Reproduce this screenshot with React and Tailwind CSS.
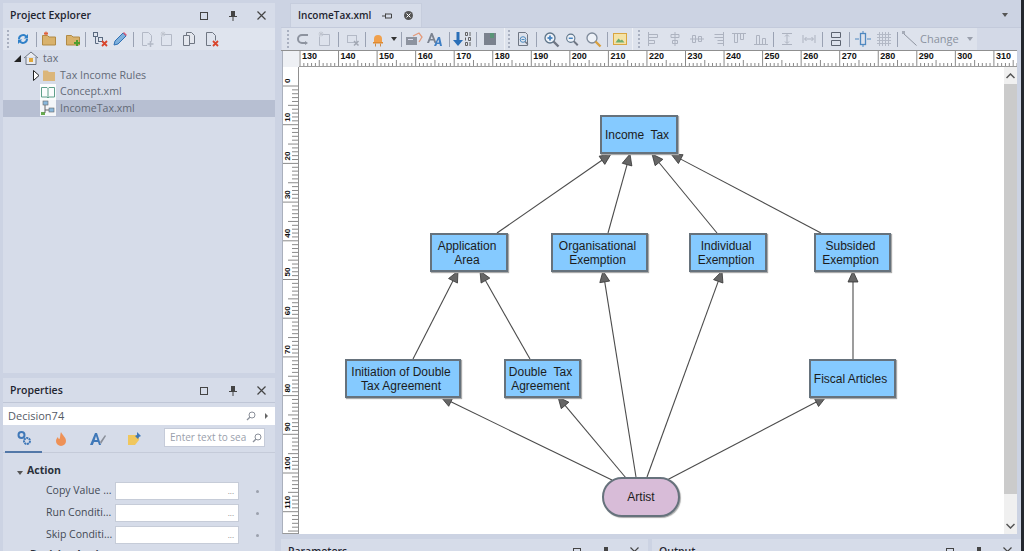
import React from "react";

const Svg = ({ children, w = 16, h = 16, vb }) => (
  <svg width={w} height={h} viewBox={vb || `0 0 ${w} ${h}`} fill="none" className="block shrink-0">{children}</svg>
);

const Grip = () => (
  <div className="flex flex-col gap-[2px] w-[2px] shrink-0">
    {[0, 1, 2, 3, 4].map((i) => <div key={i} className="w-[2px] h-[2px] bg-[#a9b0c0]" />)}
  </div>
);
const Sep = () => <div className="w-px h-[15px] bg-[#9aa2b3] shrink-0" />;
const Slot = ({ w = 21, children }) => <div className="flex items-center justify-center shrink-0 h-full" style={{ width: w }}>{children}</div>;

const Refresh = () => (
  <Svg><path d="M3 8a5 5 0 0 1 8.500-3.500L13 3v4.500H8.800l1.500-1.600A3.200 3.200 0 0 0 5 8z" fill="#2f80c8" /><path d="M13 8a5 5 0 0 1-8.500 3.500L3 13V8.500h4.200l-1.500 1.600A3.200 3.200 0 0 0 11 8z" fill="#2f80c8" /></Svg>
);
const Folder = ({ plus, star }) => (
  <Svg>
    <path d="M1.500 4.500h5l1.500 1.500h6.500v8h-13z" fill="#d9b26c" stroke="#b18a45" />
    {star && <path d="M5 0.500v4M3 2.500h4M3.500 1l3 3M6.500 1l-3 3" stroke="#e0603a" strokeWidth="1" />}
    {plus && <path d="M12 9v6M9 12h6" stroke="#4f9e2f" strokeWidth="2" />}
  </Svg>
);
const TreeX = ({ c = "#5a6a80", x = "#d9452c" }) => (
  <Svg>
    <rect x="1.500" y="1.500" width="4" height="4" stroke={c} />
    <rect x="6.500" y="6.500" width="4" height="4" stroke={c} />
    <path d="M3.500 5.500v7h3" stroke={c} />
    <path d="M10 10l5 5M15 10l-5 5" stroke={x} strokeWidth="1.800" />
  </Svg>
);
const Pencil = () => (
  <Svg><path d="M2 14l1-4 8-8 3 3-8 8z" fill="#7fb0dc" stroke="#2f70b4" /><path d="M11.500 1.500l3 3" stroke="#d9607a" strokeWidth="1.500" /></Svg>
);
const FilePlus = () => (
  <Svg><path d="M3.500 1.500h6l3 3v6M8 14.500H3.500v-13" stroke="#b3b9c6" /><path d="M11.500 10v6M8.500 13h6" stroke="#b3b9c6" strokeWidth="1.500" /></Svg>
);
const FileStar = () => (
  <Svg><path d="M4.500 3.500h8v11h-10v-9" stroke="#b3b9c6" /><path d="M4 0.500v5M1.500 3h5M2.200 1.200l3.600 3.600M5.800 1.200l-3.600 3.600" stroke="#c0c5cf" /></Svg>
);
const Copy = () => (
  <Svg><path d="M5.500 1.500h5l3 3v8h-8z" stroke="#6f7683" fill="#e4e7ee" /><path d="M2.500 4.500h6v10h-6z" stroke="#6f7683" fill="#e4e7ee" /></Svg>
);
const FileX = () => (
  <Svg><path d="M3.500 1.500h6l3 3v5M8 14.500H3.500v-13" stroke="#6f7683" /><path d="M10 10l5 5M15 10l-5 5" stroke="#d9452c" strokeWidth="1.800" /></Svg>
);
const Undo = () => (
  <Svg><path d="M12 4H6a4 4 0 0 0 0 8h4" stroke="#8d939f" strokeWidth="2" /><path d="M9 10l3 2-3 2z" fill="#8d939f" /></Svg>
);
const BoxX = () => (
  <Svg><rect x="3.500" y="4.500" width="9" height="7" stroke="#b3b9c6" /><path d="M10 10l4.500 4.500M14.500 10L10 14.500" stroke="#a0a6b2" strokeWidth="1.500" /></Svg>
);
const Bulb = () => (
  <Svg><path d="M4 8a4 4 0 0 1 8 0v3H4z" fill="#f0a04c" /><rect x="3" y="11" width="10" height="1.500" fill="#e08a30" /><path d="M5.500 12.500v3M10.500 12.500v3" stroke="#c98a4a" /></Svg>
);
const Caret = () => <div className="w-0 h-0 border-l-[3.500px] border-r-[3.500px] border-t-[4px] border-l-transparent border-r-transparent border-t-[#333]" />;
const BoxArrow = () => (
  <Svg w={18} h={16}><rect x="1" y="6" width="11" height="8" fill="#8d939f" /><rect x="3" y="8" width="5" height="1" fill="#dde" /><path d="M8 5l6-3 3 4-3 5" stroke="#e49a7a" strokeWidth="1.300" /></Svg>
);
const FontA = () => (
  <svg width="20" height="16" viewBox="0 0 20 16" className="block"><path d="M1 12L5 2h1.500l4 10h-2l-1-2.600H4L3 12zM4.600 8h2.300L5.800 5z" fill="#7b8390" /><path d="M8 15l4-9h2l2 9h-2l-.4-2h-2.500l-1 2zM11 11.500h2l-.5-3z" fill="#3f7fc4" /></svg>
);
const SortDown = () => (
  <svg width="20" height="16" viewBox="0 0 20 16" fill="none" className="block"><path d="M5 1v10" stroke="#2a6fb8" strokeWidth="3" /><path d="M0 9h10l-5 6z" fill="#2a6fb8" /><path d="M12.500 1.500h2v3h-2zM17 1v4M12.500 6.500v3M15.500 6.500h2v3h-2zM12.500 11.500h2v3h-2zM17 11v4" stroke="#555" strokeWidth=".9" /></svg>
);
const Book = () => (
  <Svg><rect x="2" y="2" width="12" height="12" fill="#7b828e" /><rect x="8" y="2" width="4" height="5" fill="#5a9578" /></Svg>
);
const DocZoom = () => (
  <Svg><path d="M3.500 1.500h7l2 2v11h-9z" stroke="#6f7683" /><circle cx="8" cy="8.500" r="2.800" stroke="#4f8cc0" /><path d="M10 10.500l3 3" stroke="#6f7683" strokeWidth="1.500" /><path d="M6.500 8.500h3" stroke="#4f8cc0" /></Svg>
);
const Lens = ({ sign, fill = "#4684c0" }) => (
  <svg width="17" height="17" viewBox="0 0 17 17" className="block">
    <circle cx="7" cy="7" r="5" stroke={sign === "none" ? "#7e8a9a" : "#5e7488"} strokeWidth="1.300" fill="#eef2f8" />
    <path d="M10.500 10.500l5 5" stroke={sign === "none" ? "#d8a040" : "#6f7683"} strokeWidth="2.400" />
    {sign !== "none" && <path d="M4.500 7h5" stroke={fill} strokeWidth="1.800" />}
    {sign === "plus" && <path d="M7 4.500v5" stroke={fill} strokeWidth="1.800" />}
  </svg>
);
const Picture = () => (
  <Svg><rect x="1.500" y="2.500" width="13" height="11" fill="#f4e2a6" stroke="#d9a540" /><path d="M3.500 11.500l3-4 2 2 1.500-1 2.500 3z" fill="#6fae6f" /></Svg>
);
const AlignA = ({ d }) => (
  <Svg><path d={d} stroke="#adb3c0" /></Svg>
);
const SmallLens = () => (
  <svg width="10" height="10" viewBox="0 0 10 10" fill="none" className="block shrink-0"><circle cx="6" cy="4" r="3" stroke="#8a8f99" /><path d="M3.800 6.200L1 9" stroke="#8a8f99" strokeWidth="1.300" /></svg>
);

const Node = ({ x, y, w, h = 39, children, cls = "" }) => (
  <div
    className={`absolute flex items-center justify-center text-center pr-[4px] bg-[#85caff] border-2 border-[#66727c] text-[12px] leading-[14px] text-[#1c1c1c] shadow-[1px_1px_1px_#aaa] ${cls}`}
    style={{ left: x - 299, top: y - 67, width: w, height: h, fontFamily: '"Liberation Sans", sans-serif' }}
  >
    <span>{children}</span>
  </div>
);

const edges = [
  [497, 233, 611, 154], [608, 233, 630, 154], [717, 233, 652, 154], [821, 233, 671, 154],
  [413, 359, 458, 271], [530, 359, 480, 271], [612, 480, 441, 397], [626, 478, 558, 397],
  [636, 477, 603, 271], [647, 477, 722, 271], [667, 480, 826, 397], [853, 359, 853, 271],
];

const Arrow = ({ e }) => {
  const [x1, y1, x2, y2] = e;
  const a = Math.atan2(y2 - y1, x2 - x1);
  const L = 11, W = 5;
  const bx = x2 - L * Math.cos(a), by = y2 - L * Math.sin(a);
  const nx = -Math.sin(a) * W, ny = Math.cos(a) * W;
  return (
    <g transform="translate(-299 -67)">
      <line x1={x1} y1={y1} x2={bx} y2={by} stroke="#4b4b4b" strokeWidth="1.100" />
      <polygon points={`${x2},${y2} ${bx + nx},${by + ny} ${bx - nx},${by - ny}`} fill="#666" stroke="#333" strokeWidth=".8" />
    </g>
  );
};

const HRuler = () => {
  const step = 38.55, tick = [];
  for (let i = 0; i < 190; i++) {
    const x = 1 + (i * step) / 10;
    const m = i % 10 === 0, f = i % 5 === 0;
    tick.push(<line key={i} x1={x} x2={x} y1={m ? 0 : 16} y2={m ? 16 : f ? 9 : 12} stroke="#8a8a8a" strokeWidth="1" />);
  }
  return (
    <svg width="718" height="16" className="block">
      {tick}
      <line x1="0" x2="718" y1="15.500" y2="15.500" stroke="#9a9a9a" />
      {Array.from({ length: 19 }).map((_, i) => (
        <text key={i} x={3 + i * step} y="8" fontSize="9" fontWeight="700" fill="#111" fontFamily="Liberation Sans, sans-serif">{130 + i * 10}</text>
      ))}
    </svg>
  );
};

const VRuler = () => {
  const step = 38.7, tick = [];
  for (let i = 0; i < 125; i++) {
    const y = 19 + (i * step) / 10;
    const m = i % 10 === 0, f = i % 5 === 0;
    tick.push(<line key={i} x1={m ? 0 : f ? 5 : 9} x2="16" y1={y} y2={y} stroke="#8a8a8a" strokeWidth="1" />);
  }
  return (
    <svg width="16" height="467" className="block">
      {tick}
      {Array.from({ length: 12 }).map((_, i) => (
        <text key={i} transform={`translate(7 ${16 + i * step}) rotate(-90)`} fontSize="8" fontWeight="700" fill="#111" fontFamily="Liberation Sans, sans-serif">{i * 10}</text>
      ))}
    </svg>
  );
};

const PanelHead = ({ title }) => (
  <div className="h-[24px] flex items-center shrink-0 pl-[7px] pt-[1px] text-[10.500px] font-semibold text-[#1f2530]">
    <span className="flex-1">{title}</span>
    <div className="w-[8px] h-[8px] border border-[#444] mr-[21px]" />
    <svg width="8" height="10" viewBox="0 0 8 10" className="block mr-[20px]"><path d="M2 0h4v5h2v1H4.500v4h-1V6H0V5h2z" fill="#444" /></svg>
    <svg width="9" height="9" viewBox="0 0 9 9" className="block mr-[9px]"><path d="M.5.500l8 8M8.500.500l-8 8" stroke="#444" strokeWidth="1.200" /></svg>
  </div>
);

const TreeRow = ({ pl, icon, label, sel, arrow }) => (
  <div className={`h-[16.700px] flex items-center text-[10.600px] text-[#636a77] ${sel ? "bg-[#b7bfd2]" : ""}`} style={{ paddingLeft: pl }}>
    {arrow}
    {icon}
    <span className="ml-[4px] pt-[1px]">{label}</span>
  </div>
);

const PropRow = ({ label }) => (
  <div className="h-[22px] flex items-center shrink-0">
    <span className="w-[112px] pl-[43px] pr-[1px] text-[10.500px] text-[#444a55] whitespace-nowrap overflow-hidden">{label}</span>
    <div className="w-[124px] h-[18px] bg-white border border-[#c6ccd8] flex items-center justify-end pr-[4px] text-[8px] leading-none text-[#888]">...</div>
    <div className="w-[3px] h-[3px] rounded-full bg-[#9ba1ad] ml-[17px]" />
  </div>
);

export default function App() {
  const font = { fontFamily: '"Open Sans", "Noto Sans", sans-serif' };
  return (
    <div className="w-[1024px] h-[551px] flex overflow-hidden bg-[#ccd3e3]" style={font}>
      {/* left column */}
      <div className="w-[281px] shrink-0 pl-[3px] pr-[6px] pt-[3px] flex flex-col gap-[5px]">
        <div className="h-[370px] shrink-0 bg-[#d6dce9] flex flex-col">
          <PanelHead title="Project Explorer" />
          <div className="h-[22px] mt-[1px] flex items-center bg-[#dfe4ee] pl-[4px] shrink-0">
            <Grip />
            <Slot w={27}><Refresh /></Slot>
            <Sep />
            <Slot w={23}><Folder star /></Slot>
            <Slot w={25}><Folder plus /></Slot>
            <Sep />
            <Slot w={28}><TreeX /></Slot>
            <Slot w={12}><Pencil /></Slot>
            <Slot w={7} />
            <Sep />
            <Slot w={26}><FilePlus /></Slot>
            <Slot w={14}><FileStar /></Slot>
            <Slot w={30}><Copy /></Slot>
            <Slot w={14}><FileX /></Slot>
          </div>
          <div className="flex flex-col">
            <TreeRow pl={11} label="tax"
              arrow={<div className="w-0 h-0 mr-[2px] border-l-[7px] border-l-transparent border-b-[7px] border-b-[#222]" />}
              icon={<Svg><path d="M1 8l7-6 7 6M3 7v7.500h10V7" stroke="#6f7683" fill="#e8ebf1" /><rect x="6" y="8" width="4" height="4" fill="#e0a83c" /></Svg>} />
            <TreeRow pl={30} label="Tax Income Rules"
              arrow={<svg width="7" height="11" viewBox="0 0 7 11" className="block"><path d="M.5.500l5.500 5-5.500 5z" stroke="#222" fill="#fff" /></svg>}
              icon={<Svg><path d="M3 3.500h4.500L9 5h6v9H3z" fill="#dbb67a" /></Svg>} />
            <TreeRow pl={37} label="Concept.xml"
              icon={<Svg><rect width="16" height="16" fill="#fbfcfd" /><path d="M1.500 3.500h5.500l1 1 1-1h5.500v9.500H9l-1 1-1-1H1.500zM8 4.500v9" stroke="#5f9f8a" fill="none" /></Svg>} />
            <TreeRow pl={37} sel label="IncomeTax.xml"
              icon={<Svg><rect width="16" height="16" fill="#f4f6f9" /><rect x="3" y="1" width="5" height="4" fill="#8ab8dc" stroke="#666" strokeWidth=".6" /><rect x="9" y="8" width="5" height="4" fill="#8ab8dc" stroke="#666" strokeWidth=".6" /><rect x="1" y="12" width="4" height="3" fill="#67a94f" /><path d="M5 5v8M5 10h4" stroke="#666" /></Svg>} />
          </div>
        </div>

        <div className="flex-1 bg-[#d6dce9] flex flex-col overflow-hidden">
          <PanelHead title="Properties" />
          <div className="h-px bg-[#bfc6d6] shrink-0" />
          <div className="h-[18px] mt-[4px] bg-white flex items-center pl-[5px] pr-[4px] text-[11px] text-[#555b66] shrink-0">
            <span className="flex-1">Decision74</span>
            <div className="mr-[9px]"><SmallLens /></div>
            <div className="w-0 h-0 border-y-[3px] border-l-[3px] border-y-transparent border-l-[#666] mr-[3px]" />
          </div>
          <div className="h-[28px] shrink-0 flex items-stretch border-b border-[#c5cbd9]">
            <div className="w-[37px] ml-[2px] flex items-center justify-center border-b-2 border-[#5378a8] -mb-px">
              <Svg><circle cx="5.500" cy="5" r="3" stroke="#3f78b8" strokeWidth="2" /><circle cx="11" cy="11" r="3" stroke="#3f78b8" strokeWidth="2" strokeDasharray="2 .6" /></Svg>
            </div>
            <div className="w-[37px] flex items-center justify-center">
              <Svg><path d="M8 1c1 3 5 5 5 9a5 5 0 0 1-10 0c0-2 1-3 2-4 0 1 .5 2 1.500 2C7.500 6 7 3 8 1z" fill="#ee9156" /></Svg>
            </div>
            <div className="w-[37px] flex items-center justify-center">
              <svg width="18" height="16" viewBox="0 0 18 16" className="block"><path d="M1 14L6 2h2l4 12h-2l-1-3H5l-1.200 3zM5.700 9h2.600L7 5z" fill="#3f78b8" /><path d="M11 11l5-7 1 1-5 8z" fill="#8a8f9a" /></svg>
            </div>
            <div className="w-[37px] flex items-center justify-center">
              <Svg><path d="M1 4h11v5l-4 5H1z" fill="#f0c75e" /><path d="M10 1l4 4-2 1-1 2-3-3 2-1z" fill="#3f78b8" /></Svg>
            </div>
            <div className="w-[101px] h-[19px] mt-[3px] ml-[11px] bg-white border border-[#c5cbd9] flex items-center pl-[5px] text-[10px] text-[#9aa0ac] overflow-hidden whitespace-nowrap">
              <span className="flex-1 overflow-hidden">Enter text to sea</span>
              <div className="mx-[2px]"><SmallLens /></div>
            </div>
          </div>
          <div className="h-[27px] shrink-0 flex items-end pb-[1px] pl-[14px] text-[10.500px] font-bold text-[#2a303a]">
            <div className="w-0 h-0 mb-[4px] mr-[4px] border-x-[3px] border-t-[4px] border-x-transparent border-t-[#555]" />
            Action
          </div>
          <PropRow label="Copy Value ..." />
          <PropRow label="Run Conditi..." />
          <PropRow label="Skip Conditi..." />
          <div className="pl-[27px] mt-[1px] text-[10.500px] font-bold text-[#2a303a] leading-[14px]">Decision Logic</div>
        </div>
      </div>

      {/* document column */}
      <div className="flex-1 min-w-0 flex flex-col">
        <div className="h-[27px] shrink-0 pt-[3px] pl-[9px] flex items-stretch">
          <div className="w-[132px] bg-[#d6dce9] border border-[#c6cddd] border-b-0 flex items-center pl-[7px] text-[10px] font-semibold text-[#1f2530]">
            <span>IncomeTax.xml</span>
            <svg width="10" height="8" viewBox="0 0 10 8" fill="none" className="block ml-[11px]"><path d="M0 4h3M3.500 1.500v5M3.500 2h6v4h-6" stroke="#444" /></svg>
            <div className="ml-[12px] w-[9px] h-[9px] rounded-full bg-[#555] flex items-center justify-center">
              <svg width="5" height="5" viewBox="0 0 5 5" className="block"><path d="M.5.500l4 4M4.500.500l-4 4" stroke="#fff" /></svg>
            </div>
          </div>
          <div className="flex-1 flex items-center justify-end pr-[13px]">
            <div className="w-0 h-0 border-x-[3.500px] border-t-[4px] border-x-transparent border-t-[#555]" />
          </div>
        </div>
        <div className="h-[23px] shrink-0 pl-[1px] pr-[3px] flex items-center bg-[#d3d9e7] border-t border-[#c3cadb]">
          <div className="w-[695px] h-full flex items-center bg-[#dde2ec] pl-[5px]">
            <Grip />
            <Slot w={4} />
            <Slot w={22}><Undo /></Slot>
            <Slot w={20}><FileStar /></Slot>
            <Slot w={3} />
            <Sep />
            <Slot w={26}><BoxX /></Slot>
            <Sep />
            <Slot w={24}><Bulb /></Slot>
            <Slot w={7}><Caret /></Slot>
            <Slot w={4} />
            <Sep />
            <Slot w={24}><BoxArrow /></Slot>
            <Slot w={20}><FontA /></Slot>
            <Slot w={3} />
            <Sep />
            <Slot w={26}><SortDown /></Slot>
            <Sep />
            <Slot w={26}><Book /></Slot>
            <div className="w-px h-full bg-[#eef0f5] ml-[1px] mr-[3px]" />
            <Grip />
            <Slot w={26}><DocZoom /></Slot>
            <Sep />
            <Slot w={28}><Lens sign="plus" /></Slot>
            <Slot w={14}><Lens sign="minus" /></Slot>
            <Slot w={28}><Lens sign="none" /></Slot>
            <Sep />
            <Slot w={24}><Picture /></Slot>
            <div className="w-px h-full bg-[#eef0f5] mr-[5px]" />
            <Grip />
            <Slot w={28}><AlignA d="M2.500 1v14M2.500 3.500h9v3h-9M2.500 9.500h6v3h-6" /></Slot>
            <Slot w={14}><AlignA d="M8 1v14M4 3.500h8v3H4zM5.500 9.500h5v3h-5z" /></Slot>
            <Slot w={30}><AlignA d="M1 8h14M3.500 4.500h3v7h-3zM9.500 5.500h3v5h-3z" /></Slot>
            <Slot w={12}><AlignA d="M13.500 1v14M4.500 3.500h9v3h-9M7.500 9.500h6v3h-6" /></Slot>
            <Slot w={30}><AlignA d="M1 2.500h14M3.500 2.500v9h3v-9M9.500 2.500v6h3v-6" /></Slot>
            <Slot w={14}><AlignA d="M1 13.500h14M3.500 13.500v-9h3v9M9.500 13.500v-6h3v6" /></Slot>
            <Slot w={5} />
            <Sep />
            <Slot w={26}><AlignA d="M3 2.500h10M3 13.500h10M8 4v8M6 5.500l2-2 2 2M6 10.500l2 2 2-2" /></Slot>
            <Slot w={18}><AlignA d="M2 4v8M14 4v8M4 8h8M5.500 6l-2 2 2 2M10.500 6l2 2-2 2" /></Slot>
            <Slot w={4} />
            <Sep />
            <Slot w={26}><Svg><path d="M3.500 1.500h9v5h-9zM3.500 9.500h9v5h-9z" stroke="#5c6370" /></Svg></Slot>
            <Sep />
            <Slot w={26}><Svg><rect x="5.500" y="2.500" width="5" height="11" stroke="#4f88c0" strokeWidth="1.300" /><path d="M0 8h4M12 8h4M8 0v2M8 14v2" stroke="#4f88c0" /></Svg></Slot>
            <Slot w={16}><Svg><path d="M1 3.500h14M1 6.500h14M1 9.500h14M1 12.500h14M3.500 1v14M6.500 1v14M9.500 1v14M12.500 1v14" stroke="#b3b9c6" /></Svg></Slot>
            <Slot w={5} />
            <Sep />
            <Slot w={24}><Svg><path d="M1.500 2.500l13 12" stroke="#8d939f" /><rect x="0" y="0" width="3" height="3" fill="#a6acb8" /></Svg></Slot>
            <span className="text-[11px] text-[#8b92a0] -ml-[2px]">Change</span>
            <div className="ml-[8px] w-0 h-0 border-x-[3.500px] border-t-[4px] border-x-transparent border-t-[#9aa0ac]" />
          </div>
        </div>
        <div className="h-[17px] shrink-0 flex border-t border-[#8f8f8f] mr-[4px]">
          <div className="w-[17px] bg-[#eef0f4] border-l border-[#aab0bd] ml-px shrink-0" />
          <div className="w-[718px] bg-white overflow-hidden"><HRuler /></div>
        </div>
        <div className="h-[467px] shrink-0 flex">
          <div className="w-[17px] ml-px shrink-0 bg-white border-l border-[#aab0bd] border-b border-b-[#999] overflow-hidden"><VRuler /></div>
          <div className="w-[706px] border-l border-[#8f8f8f] bg-white relative overflow-hidden -ml-px shrink-0">
            <svg width="705" height="467" className="absolute left-0 top-0">
              {edges.map((e, i) => <Arrow key={i} e={e} />)}
            </svg>
            <Node x={600} y={115} w={78} cls="[word-spacing:3px]">Income Tax</Node>
            <Node x={430} y={233} w={78}>Application<br />Area</Node>
            <Node x={551} y={233} w={97}>Organisational<br />Exemption</Node>
            <Node x={689} y={233} w={78}>Individual<br />Exemption</Node>
            <Node x={814} y={233} w={77}>Subsided<br />Exemption</Node>
            <Node x={345} y={359} w={116}>Initiation of Double<br />Tax Agreement</Node>
            <Node x={504} y={359} w={77}>Double&nbsp;&nbsp;Tax<br />Agreement</Node>
            <Node x={809} y={359} w={87}>Fiscal Articles</Node>
            <div
              className="absolute flex items-center justify-center bg-[#d8bcd8] border-2 border-[#66727c] rounded-[20px] text-[12px] text-[#1c1c1c] shadow-[1px_1px_1px_#aaa]"
              style={{ left: 602 - 299, top: 477 - 67, width: 78, height: 40, fontFamily: '"Liberation Sans", sans-serif' }}
            >Artist</div>
          </div>
          <div className="w-[13px] shrink-0 flex flex-col bg-[#f0f0f0]">
            <div className="h-[17px] flex items-center justify-center">
              <svg width="9" height="6" viewBox="0 0 9 6" fill="none" className="block"><path d="M.5 5l4-4 4 4" stroke="#555" strokeWidth="1.500" /></svg>
            </div>
            <div className="h-[410px] bg-[#cbcbcb]" />
            <div className="flex-1 flex items-end justify-center pb-[5px]">
              <svg width="9" height="6" viewBox="0 0 9 6" fill="none" className="block"><path d="M.5 1l4 4 4-4" stroke="#555" strokeWidth="1.500" /></svg>
            </div>
          </div>
        </div>
        <div className="flex-1 mt-[5px] flex gap-[4px] min-h-0 overflow-hidden">
          <div className="w-[367px] bg-[#d6dce9] overflow-hidden"><PanelHead title="Parameters" /></div>
          <div className="flex-1 bg-[#d6dce9] overflow-hidden"><PanelHead title="Output" /></div>
        </div>
      </div>
      <div className="w-[3px] shrink-0 bg-[#23272e]" />
    </div>
  );
}
